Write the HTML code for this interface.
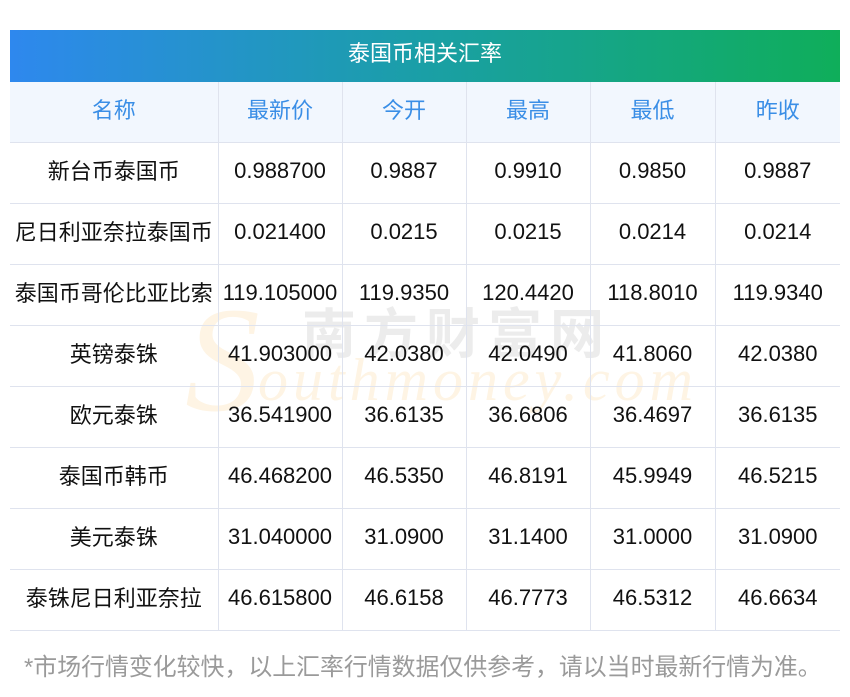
<!DOCTYPE html>
<html><head><meta charset="utf-8"><style>
body{margin:0;width:850px;height:697px;background:#fff;position:relative;overflow:hidden;font-family:"Liberation Sans","Noto Sans CJK SC",sans-serif;}
.wm1{position:absolute;left:302px;top:290px;font-size:54px;color:#ececec;letter-spacing:8px;font-family:"Noto Sans CJK SC",sans-serif;font-weight:bold;z-index:0;white-space:nowrap}
.wm2{position:absolute;left:258px;top:346px;font-size:60px;color:#fef4e4;font-style:italic;font-family:"Liberation Serif",serif;letter-spacing:5px;z-index:0;white-space:nowrap}
.wmS{position:absolute;left:185px;top:285px;font-size:150px;color:#fef4e4;font-style:italic;font-family:"Liberation Serif",serif;z-index:0;line-height:1}
.title{position:absolute;left:10px;top:30px;width:830px;height:52px;background:linear-gradient(90deg,#2e88ee,#1a9fa6 50%,#0fae5a);color:#fff;font-size:22px;text-align:center;line-height:48px}
table{position:absolute;left:10px;top:82px;border-collapse:collapse;z-index:1;width:830px;table-layout:fixed}
td{height:60px;border:1px solid #dfe3ee;text-align:center;font-size:22px;color:#111;padding:0;white-space:nowrap;line-height:22px}
td span{position:relative;top:-2px}
td.c span{top:-1px}
tr td:first-child{border-left:none}
tr td:last-child{border-right:none}
tr:first-child td{border-top:none;background:#f2f7fe;color:#3a8ee6}
tr:first-child td span{top:-1px}
.foot{position:absolute;left:24px;top:647px;font-size:23.9px;color:#9a9a9a;white-space:nowrap}
</style></head><body>
<div class="wmS">S</div>
<div class="wm1">南方财富网</div>
<div class="wm2">outhmoney.com</div>
<div class="title">泰国币相关汇率</div>
<table>
<colgroup><col style="width:208px"><col style="width:124px"><col style="width:124px"><col style="width:124px"><col style="width:125px"><col style="width:125px"></colgroup>
<tr><td><span>名称</span></td><td><span>最新价</span></td><td><span>今开</span></td><td><span>最高</span></td><td><span>最低</span></td><td><span>昨收</span></td></tr>
<tr><td class="c"><span>新台币泰国币</span></td><td><span>0.988700</span></td><td><span>0.9887</span></td><td><span>0.9910</span></td><td><span>0.9850</span></td><td><span>0.9887</span></td></tr>
<tr><td class="c"><span>尼日利亚奈拉泰国币</span></td><td><span>0.021400</span></td><td><span>0.0215</span></td><td><span>0.0215</span></td><td><span>0.0214</span></td><td><span>0.0214</span></td></tr>
<tr><td class="c"><span>泰国币哥伦比亚比索</span></td><td><span>119.105000</span></td><td><span>119.9350</span></td><td><span>120.4420</span></td><td><span>118.8010</span></td><td><span>119.9340</span></td></tr>
<tr><td class="c"><span>英镑泰铢</span></td><td><span>41.903000</span></td><td><span>42.0380</span></td><td><span>42.0490</span></td><td><span>41.8060</span></td><td><span>42.0380</span></td></tr>
<tr><td class="c"><span>欧元泰铢</span></td><td><span>36.541900</span></td><td><span>36.6135</span></td><td><span>36.6806</span></td><td><span>36.4697</span></td><td><span>36.6135</span></td></tr>
<tr><td class="c"><span>泰国币韩币</span></td><td><span>46.468200</span></td><td><span>46.5350</span></td><td><span>46.8191</span></td><td><span>45.9949</span></td><td><span>46.5215</span></td></tr>
<tr><td class="c"><span>美元泰铢</span></td><td><span>31.040000</span></td><td><span>31.0900</span></td><td><span>31.1400</span></td><td><span>31.0000</span></td><td><span>31.0900</span></td></tr>
<tr><td class="c"><span>泰铢尼日利亚奈拉</span></td><td><span>46.615800</span></td><td><span>46.6158</span></td><td><span>46.7773</span></td><td><span>46.5312</span></td><td><span>46.6634</span></td></tr>
</table>
<div class="foot">*市场行情变化较快，以上汇率行情数据仅供参考，请以当时最新行情为准。</div>
</body></html>
